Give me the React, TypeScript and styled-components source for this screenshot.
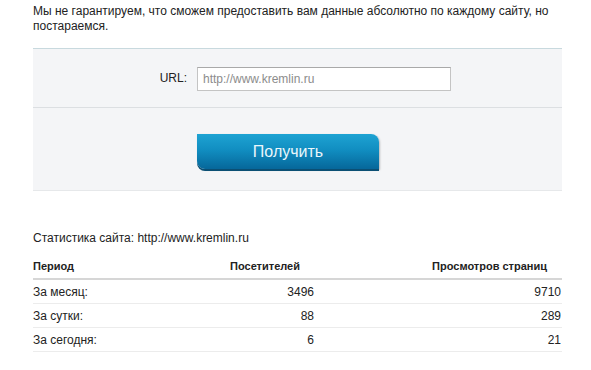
import React from 'react'
import styled, { createGlobalStyle } from 'styled-components'

const GlobalStyle = createGlobalStyle`
    body {
        margin: 0;
        background: #ffffff;
        font-family: "Liberation Sans", Arial, sans-serif;
        color: #222222;
    }
`

const Page = styled.div`
    width: 529px;
    padding: 4px 0 0 33px;
`

const Intro = styled.p`
    margin: 0;
    font-size: 12px;
    line-height: 15px;
`

const Panel = styled.form`
    margin-top: 14px;
    background: #f4f5f7;
    border-top: 1px solid #c8d9de;
    border-bottom: 1px solid #e6e8ea;
`

const FieldRow = styled.div`
    display: grid;
    grid-template-columns: 154px 254px;
    column-gap: 10px;
    align-items: center;
    height: 58px;
    border-bottom: 1px solid #dcdfe2;
`

const ButtonRow = styled.div`
    display: grid;
    grid-template-columns: 154px 182px;
    column-gap: 10px;
    padding: 26px 0 21px;
`

const Label = styled.label`
    font-size: 12px;
    text-align: right;
    color: #222;
`

const UrlInput = styled.input`
    box-sizing: border-box;
    height: 24px;
    width: 254px;
    margin: 1px 0 0;
    padding: 0 5px;
    border: 1px solid #c4c4c4;
    border-top-color: #a9a9a9;
    background: #ffffff;
    font-family: "Liberation Sans", Arial, sans-serif;
    font-size: 12px;
    color: #888;
    outline: none;

    &::placeholder {
        color: #8c8c8c;
    }
`

const SubmitButton = styled.button`
    grid-column: 2;
    height: 35px;
    border: none;
    border-radius: 0 8px 0 8px;
    background: linear-gradient(to bottom, #1ea3d3 0%, #118ec1 45%, #06679a 100%);
    box-shadow: 0 2px 0 #0b4f74, 1px 1px 2px rgba(0, 0, 0, 0.25);
    font-family: "Liberation Sans", Arial, sans-serif;
    font-size: 16px;
    color: #eaf6fb;
    cursor: pointer;
`

const StatsTitle = styled.div`
    margin-top: 40px;
    font-size: 12px;
    line-height: 15px;
`

const Table = styled.table`
    margin-top: 7px;
    width: 529px;
    border-collapse: collapse;
    table-layout: fixed;
`

// widths are content widths, padding sits on top of them
const HeadCell = styled.th<{ $w: number; $right?: boolean }>`
    width: ${p => p.$w}px;
    height: 25px;
    padding: 0 ${p => (p.$right ? 15 : 0)}px 0 0;
    text-align: ${p => (p.$right ? 'right' : 'left')};
    font-size: 11px;
    font-weight: bold;
    color: #222;
    border-bottom: 2px solid #d6d6d6;
    vertical-align: middle;
`

const Cell = styled.td<{ $right?: boolean }>`
    height: 23px;
    padding: 0 ${p => (p.$right ? 1 : 0)}px 0 0;
    text-align: ${p => (p.$right ? 'right' : 'left')};
    font-size: 12px;
    color: #222;
    border-bottom: 1px solid #ececec;
`

const rows = [
    { period: 'За месяц:', visitors: 3496, views: 9710 },
    { period: 'За сутки:', visitors: 88, views: 289 },
    { period: 'За сегодня:', visitors: 6, views: 21 },
]

export default function App() {
    return (
        <>
            <GlobalStyle />
            <Page>
                <Intro>
                    Мы не гарантируем, что сможем предоставить вам данные абсолютно по каждому сайту, но
                    постараемся.
                </Intro>
                <Panel onSubmit={e => e.preventDefault()}>
                    <FieldRow>
                        <Label htmlFor="url">URL:</Label>
                        <UrlInput id="url" placeholder="http://www.kremlin.ru" />
                    </FieldRow>
                    <ButtonRow>
                        <SubmitButton type="submit">Получить</SubmitButton>
                    </ButtonRow>
                </Panel>
                <StatsTitle>Статистика сайта: http://www.kremlin.ru</StatsTitle>
                <Table>
                    <thead>
                        <tr>
                            <HeadCell $w={150}>Период</HeadCell>
                            <HeadCell $w={117} $right>Посетителей</HeadCell>
                            <HeadCell $w={232} $right>Просмотров страниц</HeadCell>
                        </tr>
                    </thead>
                    <tbody>
                        {rows.map(r => (
                            <tr key={r.period}>
                                <Cell>{r.period}</Cell>
                                <Cell $right>{r.visitors}</Cell>
                                <Cell $right>{r.views}</Cell>
                            </tr>
                        ))}
                    </tbody>
                </Table>
            </Page>
        </>
    )
}
